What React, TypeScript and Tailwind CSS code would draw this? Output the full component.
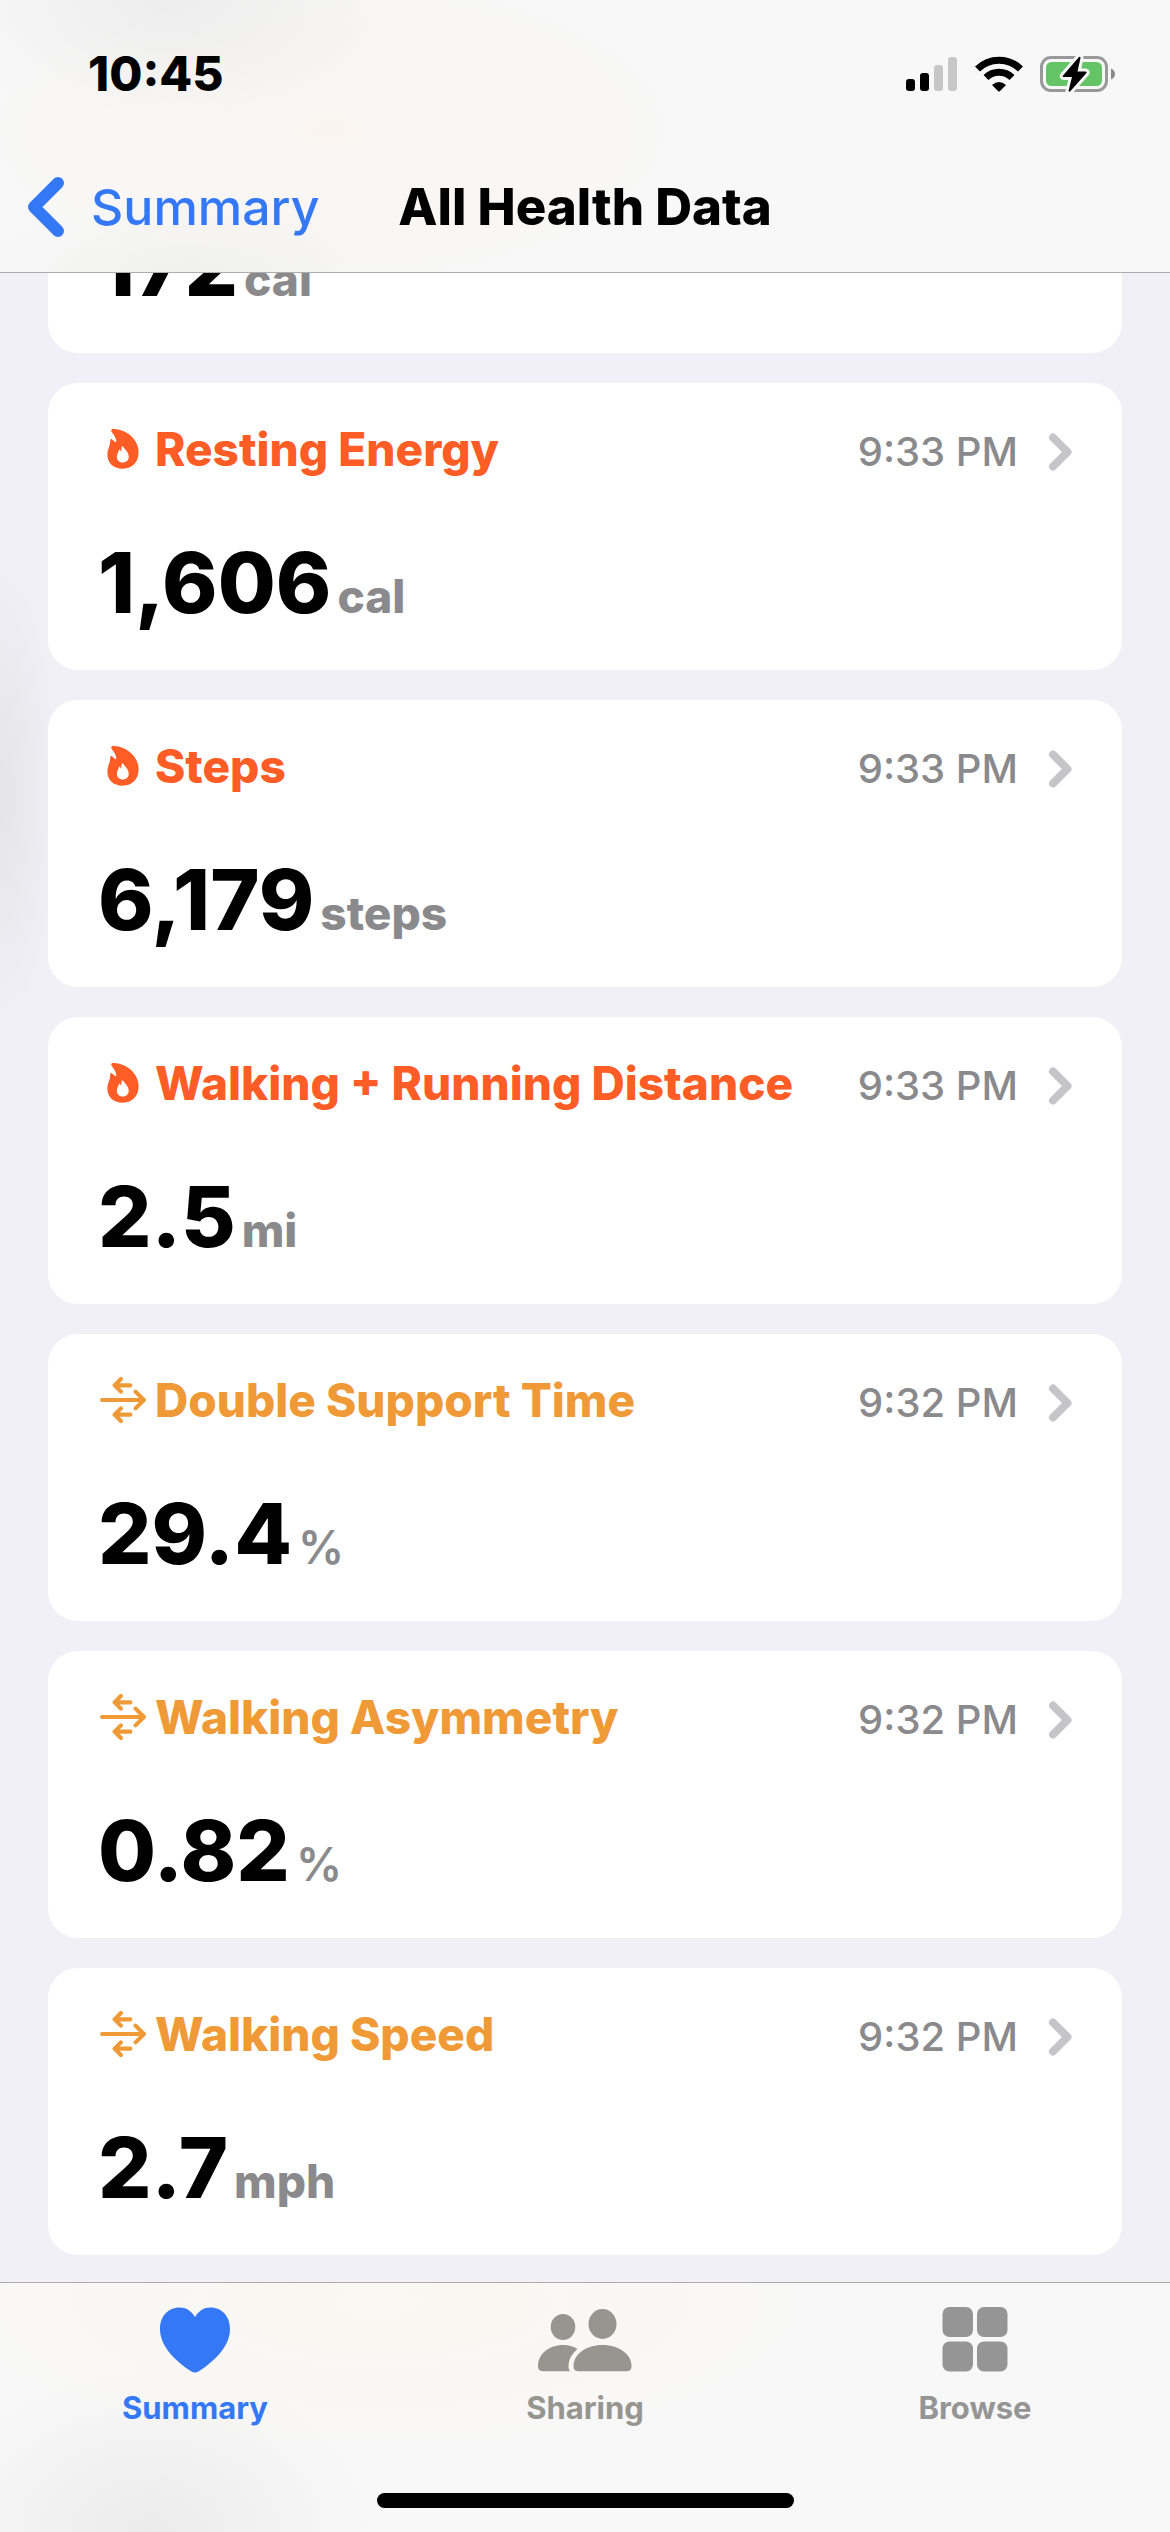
type Category = 'activity' | 'mobility';

interface Metric {
  title?: string;
  category?: Category;
  time?: string;
  value: string;
  unit: string;
}

const METRICS: Metric[] = [
  { value: '172', unit: 'cal' },
  { title: 'Resting Energy', category: 'activity', time: '9:33 PM', value: '1,606', unit: 'cal' },
  { title: 'Steps', category: 'activity', time: '9:33 PM', value: '6,179', unit: 'steps' },
  { title: 'Walking + Running Distance', category: 'activity', time: '9:33 PM', value: '2.5', unit: 'mi' },
  { title: 'Double Support Time', category: 'mobility', time: '9:32 PM', value: '29.4', unit: '%' },
  { title: 'Walking Asymmetry', category: 'mobility', time: '9:32 PM', value: '0.82', unit: '%' },
  { title: 'Walking Speed', category: 'mobility', time: '9:32 PM', value: '2.7', unit: 'mph' },
];

function SignalIcon() {
  return (
    <svg width="52" height="36" viewBox="0 0 52 36" aria-hidden="true">
      <rect x="0" y="23" width="9" height="12" rx="3" fill="#000" />
      <rect x="14" y="17" width="9" height="18" rx="3" fill="#000" />
      <rect x="28" y="9" width="9" height="26" rx="3" fill="#c7c7c7" />
      <rect x="42" y="1" width="9" height="34" rx="3" fill="#c7c7c7" />
    </svg>
  );
}

function WifiIcon() {
  return (
    <svg width="50" height="36" viewBox="0 0 50 36" aria-hidden="true">
      <path d="M3.5 13A30.5 30.5 0 0 1 46.5 13" fill="none" stroke="#000" strokeWidth="7" />
      <path d="M12 21.5A18.5 18.5 0 0 1 38 21.5" fill="none" stroke="#000" strokeWidth="7" />
      <path d="M18 29Q25 23 32 29L26 35Q25 36 24 35Z" fill="#000" />
    </svg>
  );
}

function BatteryIcon() {
  return (
    <svg width="76" height="38" viewBox="0 0 76 38" aria-hidden="true">
      <rect x="1.5" y="2.5" width="65" height="33" rx="9.5" fill="none" stroke="#999" strokeWidth="3" />
      <rect x="6" y="7" width="56" height="24" rx="5.5" fill="#65c466" />
      <path d="M71 13.5Q75 15.5 75 19Q75 22.5 71 24.5Z" fill="#8a8a8a" />
      <path
        d="M39 2L23 20.5Q22 22 24 22H32L28.5 36Q29 37.5 30.5 36L46.5 18Q47 16.5 45.5 16.5H37.5L40.5 3Q40.5 1 39 2Z"
        fill="#000"
        stroke="#f8f8f8"
        strokeWidth="6"
        strokeLinejoin="round"
        paintOrder="stroke"
      />
    </svg>
  );
}

function FlameIcon() {
  return (
    <svg width="32" height="40" viewBox="0 0 94 118" fill="currentColor" fillRule="evenodd" aria-hidden="true">
      <path d="M13 2C14 0 18 0 22 0C60 3 93 32 93 68C93 98 75 117 46 117C18 117 1 100 1 76C1 58 9 50 9 38C9 30 11 28 15 31C19 34 20 36 25 39C28 38 28 33 25 27C22 19 18 15 14 9C12 6 12 4 13 2ZM43 53C42 58 43 62 41 68L40 65C39 61 37 60 35 62C34 68 29 73 29 82C29 92 36 99 46 99C57 99 64 92 64 82C64 68 54 62 48 53C46 50 44 50 43 53Z" />
    </svg>
  );
}

function MobilityIcon() {
  return (
    <svg
      width="46"
      height="46"
      viewBox="0 0 44 44"
      fill="none"
      stroke="currentColor"
      strokeWidth="4"
      strokeLinecap="round"
      strokeLinejoin="round"
      aria-hidden="true"
    >
      <path d="M2 22H42M34 14L42 22L34 30" />
      <path d="M29 8H14M20 2L14 8L20 14" />
      <path d="M29 36H14M20 30L14 36L20 42" />
    </svg>
  );
}

function Chevron() {
  return (
    <svg width="24" height="44" viewBox="0 0 24 44" fill="none" aria-hidden="true">
      <path d="M5 10.5L19.5 25L5 39.5" stroke="#c5c5c7" strokeWidth="8" strokeLinecap="round" strokeLinejoin="round" />
    </svg>
  );
}

function HeartIcon() {
  return (
    <svg width="70" height="66" viewBox="0 0 70 66" fill="currentColor" aria-hidden="true">
      <path d="M35 10C31 3.5 26 0.5 19.5 0.5C8 0.5 0 9.5 0 22C0 38 13 52.5 31.5 64.5Q35 66.5 38.5 64.5C57 52.5 70 38 70 22C70 9.5 62 0.5 50.5 0.5C44 0.5 39 3.5 35 10Z" />
    </svg>
  );
}

function PeopleIcon() {
  return (
    <svg width="94" height="66" viewBox="0 0 94 66" fill="currentColor" aria-hidden="true">
      <ellipse cx="25" cy="20" rx="12.3" ry="13" />
      <ellipse cx="64.5" cy="17" rx="14" ry="15" />
      <path d="M0 59C0 47 11 38 25 38C30.5 38 35.5 39.5 39.5 42C33.5 47 30.5 53 30.5 59C30.5 61 31 63 32 64.3H6.5C2 64.3 0 63 0 59Z" />
      <path d="M35.5 59C35.5 48 47 38 64.5 38C82 38 93.5 48 93.5 59C93.5 63 91.5 64.3 87 64.3H42C37.5 64.3 35.5 63 35.5 59Z" />
    </svg>
  );
}

function GridIcon() {
  return (
    <svg width="66" height="66" viewBox="0 0 66 66" fill="currentColor" aria-hidden="true">
      <rect x="0.5" y="0" width="30.5" height="30" rx="7" />
      <rect x="35" y="0" width="30.5" height="30" rx="7" />
      <rect x="0.5" y="34.5" width="30.5" height="30" rx="7" />
      <rect x="35" y="34.5" width="30.5" height="30" rx="7" />
    </svg>
  );
}

function MetricCard({ title, category, time, value, unit }: Metric) {
  return (
    <article className="shrink-0 rounded-[30px] bg-white px-[50px] pt-[36px] pb-[45px]">
      {title && (
        <a href="#" className="mb-[62px] flex h-[60px] items-center">
          <span
            className={
              category === 'activity'
                ? 'mr-[7px] flex w-[50px] justify-center text-[#ff5c26]'
                : 'mr-[7px] flex w-[50px] justify-center text-[#f09a37]'
            }
          >
            {category === 'activity' ? <FlameIcon /> : <MobilityIcon />}
          </span>
          <span className="flex flex-1 items-baseline justify-between">
            <h2
              className={
                category === 'activity'
                  ? 'text-[46px] font-extrabold whitespace-nowrap text-[#ff5c26]'
                  : 'text-[46px] font-extrabold whitespace-nowrap text-[#f09a37]'
              }
            >
              {title}
            </h2>
            <time className="mr-[30px] text-[40px] font-medium whitespace-nowrap text-[#8a8a8d]">{time}</time>
          </span>
          <Chevron />
        </a>
      )}
      <p className="flex items-baseline gap-[6px]">
        <span className="text-[84px] leading-none font-extrabold">{value}</span>
        <span
          className={
            unit === '%'
              ? 'text-[46px] leading-none font-semibold text-[#8a8a8d]'
              : 'text-[46px] leading-none font-extrabold text-[#8a8a8d]'
          }
        >
          {unit}
        </span>
      </p>
    </article>
  );
}

const TABS = [
  { label: 'Summary', Icon: HeartIcon, color: 'text-[#3478f6]' },
  { label: 'Sharing', Icon: PeopleIcon, color: 'text-[#979590]' },
  { label: 'Browse', Icon: GridIcon, color: 'text-[#959595]' },
];

export default function App() {
  return (
    <div className="flex h-screen flex-col bg-[#f1f0f6] font-['Inter',sans-serif] text-black">
      <header className="shrink-0 border-b border-[#acacae] bg-[#f8f8f8] bg-[radial-gradient(ellipse_240px_120px_at_170px_0px,#ededed,transparent),radial-gradient(ellipse_220px_70px_at_190px_273px,#f0f0ef,transparent),radial-gradient(ellipse_360px_160px_at_330px_130px,#f9f4f0,transparent)]">
        <div className="flex h-[148px] items-center justify-between pr-[54px] pl-[88px]">
          <span className="text-[48px] font-extrabold">10:45</span>
          <div className="flex items-center gap-[16px]">
            <SignalIcon />
            <WifiIcon />
            <BatteryIcon />
          </div>
        </div>
        <div className="grid h-[124px] grid-cols-[1fr_auto_1fr] items-center pb-[6px]">
          <button type="button" className="flex items-center gap-[25px] pl-[28px] text-[50px] font-medium text-[#3478f6]">
            <svg width="38" height="60" viewBox="0 0 38 60" fill="none" aria-hidden="true">
              <path d="M30 6L6 30L30 54" stroke="currentColor" strokeWidth="12" strokeLinecap="round" strokeLinejoin="round" />
            </svg>
            Summary
          </button>
          <h1 className="text-[51px] font-extrabold">All Health Data</h1>
        </div>
      </header>

      <main className="flex min-h-0 flex-1 flex-col justify-end gap-[30px] overflow-hidden bg-[radial-gradient(ellipse_60px_240px_at_0px_520px,#e4e3e8,transparent)] px-[48px] pb-[27px]">
        {METRICS.map(metric => (
          <MetricCard key={metric.value} {...metric} />
        ))}
      </main>

      <footer className="shrink-0 border-t border-[#acacac] bg-[#f8f8f8] bg-[radial-gradient(ellipse_220px_160px_at_150px_250px,#ebebeb,transparent),radial-gradient(ellipse_440px_150px_at_380px_20px,#fbf7f1,transparent)]">
        <nav className="grid h-[210px] grid-cols-3 pt-[24px]">
          {TABS.map(({ label, Icon, color }) => (
            <button key={label} type="button" className={`flex flex-col items-center gap-[12px] ${color}`}>
              <Icon />
              <span className="text-[31px] font-bold">{label}</span>
            </button>
          ))}
        </nav>
        <div className="mx-auto mb-[24px] h-[15px] w-[417px] rounded-full bg-black" />
      </footer>
    </div>
  );
}
